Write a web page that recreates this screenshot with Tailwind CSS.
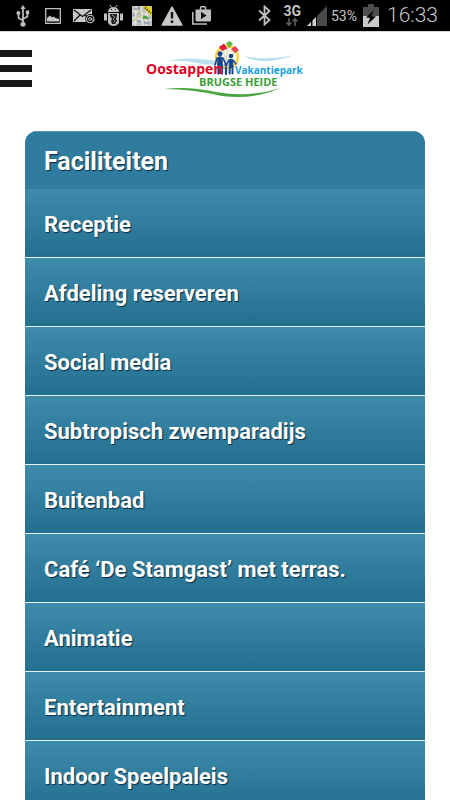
<!DOCTYPE html>
<html lang="nl">
<head>
<meta charset="utf-8">
<meta name="viewport" content="width=device-width, initial-scale=1">
<title>Faciliteiten – Brugse Heide</title>
<script src="https://cdn.jsdelivr.net/npm/@tailwindcss/browser@4"></script>
</head>
<body class="flex h-screen flex-col overflow-hidden bg-white font-['Roboto',sans-serif]">
  <!-- Status bar -->
  <div class="flex h-8 shrink-0 items-center justify-between border-b border-gray-300 bg-black pl-4 pr-3 text-[#c4c4c4]">
    <div class="flex items-center gap-[9px]">
      <svg class="mr-[6px] h-[22px] w-[14px]" viewBox="0 0 14 22" fill="none" stroke="#c0c0c0" stroke-width="1.7" role="img" aria-label="USB">
        <path d="M7 3v15M7 15.500L2.500 13V9M7 14l4.500-2.500V8"/>
        <path d="M7 0l2.600 4H4.400zM9.800 5.500h3.400v3.400H9.800z" fill="#c0c0c0" stroke="none"/>
        <circle cx="2.400" cy="8" r="2" fill="#c0c0c0" stroke="none"/><circle cx="7" cy="19.200" r="2.500" fill="#c0c0c0" stroke="none"/>
      </svg>
      <svg class="mr-[3px] h-4 w-4" viewBox="0 0 16 16" role="img" aria-label="Afbeelding">
        <path d="M.7.700h14.600v14.600H.7z" fill="none" stroke="#c0c0c0" stroke-width="1.300"/>
        <path d="M2 13.500V10l3-2.500 2 2 1.500-1 2 1.500 3.500 1v2.500z" fill="#c8c8c8"/>
      </svg>
      <svg class="h-4 w-[22px]" viewBox="0 0 22 16" role="img" aria-label="E-mail">
        <path d="M0 1h19v13H0z" fill="#c8c8c8"/>
        <path d="M1 2l8.500 6.500L18 2M1 13l6-6M12 7l3 3" fill="none" stroke="#111" stroke-width="1.300"/>
        <circle cx="17.300" cy="11" r="5" fill="#000"/>
        <circle cx="17.300" cy="11" r="3.700" fill="none" stroke="#c8c8c8" stroke-width="1.100"/>
        <circle cx="17" cy="11" r="1.400" fill="none" stroke="#c8c8c8"/><path d="M18.600 9.500v2.500h2" fill="none" stroke="#c8c8c8"/>
      </svg>
      <svg class="h-[22px] w-[19px]" viewBox="0 0 19 22" role="img" aria-label="Android">
        <path d="M6 0l1.500 2.500M13 0l-1.500 2.500" stroke="#c8c8c8"/>
        <path d="M4 7a5.500 5 0 0 1 11 0zM4 8h11v10q-2 3-5.500 3T4 18zM0 8.500h3v7H0zM16 8.500h3v7h-3z" fill="#c0c0c0"/>
        <path d="M7 4.500h1M11 4.500h1" stroke="#111"/>
        <path d="M6 9h7v2l-1 3 1 2-2 3H8l-1-3 1-2-2-3z" fill="#222"/>
        <path d="M8 10l3 2-2 2 2 2-2 2" fill="none" stroke="#aaa" stroke-dasharray="2 1"/>
      </svg>
      <svg class="h-5 w-5" viewBox="0 0 20 20" role="img" aria-label="Kaart">
        <path d="M0 0h20v20H0z" fill="#b9bec6"/>
        <path d="M0 5l20 4M4 0L3 20M9 0l2 20M0 12l20 2M15 5l-1 15M0 17l10-2" fill="none" stroke="#e3e3d4" stroke-width="1.500"/>
        <path d="M2 3h3M6 7h3M5 15l4 1M12 17h5M1 9h2M7 1v3M16 11v3" stroke="#777e8b" stroke-width="1.200"/>
        <path d="M1 14l8-4M6 3l4 7" stroke="#d5ce6d"/><path d="M11 10h4v3h-4z" fill="#4aa33d"/>
        <path d="M10 0h7l3 3v8z" fill="#dfd51c"/><path d="M13 1.500l6 6" stroke="#5d5911" stroke-width="2" stroke-dasharray="1.500 1"/>
      </svg>
      <svg class="h-5 w-[22px]" viewBox="0 0 22 20" role="img" aria-label="Waarschuwing">
        <path d="M11 1.200L20.800 19H1.200z" fill="#c8c8c8" stroke="#c8c8c8" stroke-width="1.500" stroke-linejoin="round"/>
        <path d="M11 6v6.500M11 14.500v2.500" stroke="#111" stroke-width="2.400"/>
      </svg>
      <svg class="h-[19px] w-[19px]" viewBox="0 0 19 19" role="img" aria-label="Play Store">
        <path d="M.8 6v12H15" fill="none" stroke="#c0c0c0" stroke-width="1.500"/>
        <path d="M8.500 4V1.800q0-1 1-1h3q1 0 1 1V4" fill="none" stroke="#c0c0c0" stroke-width="1.500"/>
        <path d="M3.500 3.500H19V14q0 1.500-1.500 1.500H5Q3.500 15.500 3.500 14z" fill="#c0c0c0"/>
        <path d="M9 5.800l5.500 3.700L9 13.200z" fill="#111"/>
      </svg>
    </div>
    <div class="flex items-center">
      <svg class="mr-3 h-[21px] w-[13px]" viewBox="0 0 13 21" fill="none" stroke="#c0c0c0" stroke-width="1.800" role="img" aria-label="Bluetooth">
        <path d="M1 5.500l10.500 9.500-5 4.500v-18l5 4.500L1 15.500"/>
      </svg>
      <div class="mr-[6px] flex flex-col items-center">
        <span class="text-sm font-bold leading-[12px]">3G</span>
        <svg class="h-[10px] w-3" viewBox="0 0 12 10" fill="none" stroke="#5c5c5c" stroke-width="1.600" aria-hidden="true">
          <path d="M3 1v7M.6 5.500L3 8.300l2.400-2.800M9 9V2M6.600 4.500L9 1.700l2.400 2.800"/>
        </svg>
      </div>
      <svg class="mr-1 h-5 w-5" viewBox="0 0 20 20" role="img" aria-label="Signaal">
        <path d="M0 20L20 0v20z" fill="#4a4a4a"/><path d="M0 20l4-4v4zM5.500 20v-5.500L9 11v9z" fill="#d0d0d0"/>
        <path d="M4.700 14v6M9.500 10v10" stroke="#000"/>
      </svg>
      <span class="mr-[6px] text-sm">53%</span>
      <svg class="mr-2 h-[23px] w-4" viewBox="0 0 16 23" role="img" aria-label="Batterij laadt op">
        <path d="M5 0h6v3h5v9H0V3h5z" fill="#4e4e4e"/><path d="M0 12h16v11H0z" fill="#c8c8c8"/>
        <path d="M11 6l-8 7.500 4 .5-2.500 6.500L13 12.500l-4.500-.5z" fill="#080808"/>
      </svg>
      <time class="text-[21px] font-light">16:33</time>
    </div>
  </div>

  <!-- App header -->
  <header class="grid h-[72px] shrink-0 grid-cols-[32px_1fr_32px] items-center">
    <button type="button" aria-label="Menu" class="flex w-8 flex-col gap-2">
      <span class="h-[7px] w-full bg-[#181818]"></span>
      <span class="h-[7px] w-full bg-[#181818]"></span>
      <span class="h-[7px] w-full bg-[#181818]"></span>
    </button>
    <a href="#" class="justify-self-center" aria-label="Oostappen Vakantiepark Brugse Heide">
      <svg class="h-[60px] w-[158px]" viewBox="0 0 158 60" font-family="'Open Sans', sans-serif" font-weight="700">
        <path d="M18 24q20-6 45-2 15 2 28-1-18 9-40 4-18-4-33-1zM98 18q22 5 50-1-18 7-34 6-10-1-16-5z" fill="#b9e0f1"/>
        <circle cx="81" cy="19" r="11" fill="#fffbe0" stroke="#fbd44c" stroke-width="2.500"/>
        <path d="M77 12l3 12M82 9l-2 14M89 14l-8 12" stroke="#b9aeb5" stroke-width=".6"/>
        <path d="M73 9l5-3.500 3.500 5L76 13z" fill="#e3203a"/><path d="M80 5l4-2 3 3-4 4z" fill="#62b640"/><path d="M85 11l4-3 4 4-4 3z" fill="#ef4153"/>
        <g stroke="#17468d" stroke-linecap="round" fill="none">
          <path d="M74 21v5" stroke-width="5.500"/><path d="M72.500 27v8.500M76 27v8.500" stroke-width="2.300"/><path d="M71 20l-2 7M77 20l3 7" stroke-width="1.600"/>
          <path d="M85 23v5" stroke-width="4.500"/><path d="M83.700 28v7.500M86.500 28v7.500" stroke-width="2"/><path d="M87 22l3 4M83 22l-3 5" stroke-width="1.500"/>
          <path d="M80 30v6" stroke-width="2.300"/>
        </g>
        <g fill="#17468d"><circle cx="74" cy="15.800" r="2.500"/><circle cx="85" cy="18" r="2.300"/><circle cx="80" cy="27" r="1.700"/></g>
        <text x="0" y="36" font-size="14" fill="#e2001f">Oostappen</text>
        <text x="89" y="36" font-size="10" fill="#159ed9">Vakantiepark</text>
        <text x="53" y="48" font-size="11" fill="#3a9f35">BRUGSE HEIDE</text>
        <path d="M18 51q24-3 52 3 34 6 64-4-26 12-58 8-30-7-58-7z" fill="#48a640"/>
      </svg>
    </a>
  </header>

  <!-- Facilities list -->
  <main class="min-h-0 flex-1 overflow-hidden px-[25px] pt-[27px]">
    <nav aria-labelledby="title" class="overflow-hidden rounded-t-xl bg-[#2f7c9f] text-white [text-shadow:1px_1px_1px_#0a2c44]">
      <h1 id="title" class="flex h-[58px] items-center border-t border-[#5a9ab5] px-[19px] pt-[3px] text-[25px] font-bold">Faciliteiten</h1>
      <ul class="text-[22px] font-bold [&_a]:flex [&_a]:h-[69px] [&_a]:items-center [&_a]:border-b [&_a]:border-[#e4f0f5] [&_a]:bg-linear-to-b [&_a]:from-[#3e8bab] [&_a]:to-[#236f90] [&_a]:px-[19px] [&_a]:pt-[3px]">
        <li><a href="#">Receptie</a></li>
        <li><a href="#">Afdeling reserveren</a></li>
        <li><a href="#">Social media</a></li>
        <li><a href="#">Subtropisch zwemparadijs</a></li>
        <li><a href="#">Buitenbad</a></li>
        <li><a href="#">Café ‘De Stamgast’ met terras.</a></li>
        <li><a href="#">Animatie</a></li>
        <li><a href="#">Entertainment</a></li>
        <li><a href="#">Indoor Speelpaleis</a></li>
      </ul>
    </nav>
  </main>
</body>
</html>
